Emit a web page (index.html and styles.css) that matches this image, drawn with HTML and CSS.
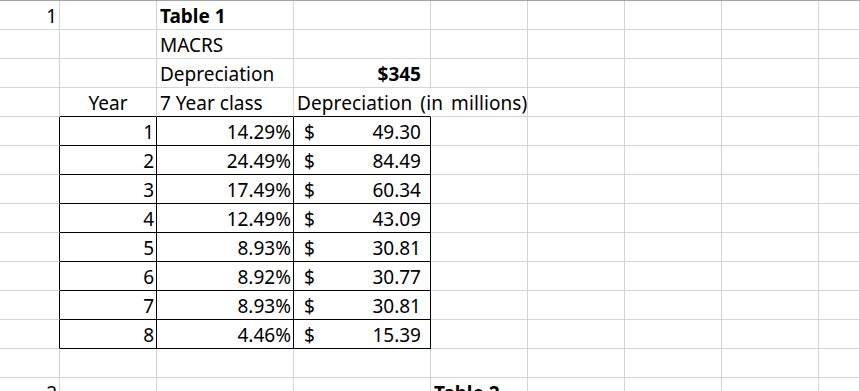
FILE: index.html
```html
<!DOCTYPE html>
<html lang="en">
<head>
<meta charset="utf-8">
<title>Table 1 MACRS Depreciation</title>
<link rel="stylesheet" href="styles.css">
</head>
<body>
<div class="sheet">
  <!-- row 1 -->
  <div class="c r">1</div><div class="c"></div><div class="c b">Table 1</div><div class="c"></div><div class="c"></div><div class="c"></div><div class="c"></div><div class="c"></div><div class="c"></div>
  <!-- row 2 -->
  <div class="c"></div><div class="c"></div><div class="c">MACRS</div><div class="c"></div><div class="c"></div><div class="c"></div><div class="c"></div><div class="c"></div><div class="c"></div>
  <!-- row 3 -->
  <div class="c"></div><div class="c"></div><div class="c">Depreciation</div><div class="c r b acc-pad">$345</div><div class="c"></div><div class="c"></div><div class="c"></div><div class="c"></div><div class="c"></div>
  <!-- row 4 -->
  <div class="c"></div><div class="c ctr tt">Year</div><div class="c tt">7 Year class</div><div class="c tt spill">Depreciation (in millions)</div><div class="c"></div><div class="c"></div><div class="c"></div><div class="c"></div><div class="c"></div>
  <!-- rows 5-12 -->
  <div class="c tl"></div><div class="c r t">1</div><div class="c r t">14.29%</div><div class="c t acc"><span>$</span><span>49.30</span></div><div class="c"></div><div class="c"></div><div class="c"></div><div class="c"></div><div class="c"></div>
  <div class="c tl"></div><div class="c r t">2</div><div class="c r t">24.49%</div><div class="c t acc"><span>$</span><span>84.49</span></div><div class="c"></div><div class="c"></div><div class="c"></div><div class="c"></div><div class="c"></div>
  <div class="c tl"></div><div class="c r t">3</div><div class="c r t">17.49%</div><div class="c t acc"><span>$</span><span>60.34</span></div><div class="c"></div><div class="c"></div><div class="c"></div><div class="c"></div><div class="c"></div>
  <div class="c tl"></div><div class="c r t">4</div><div class="c r t">12.49%</div><div class="c t acc"><span>$</span><span>43.09</span></div><div class="c"></div><div class="c"></div><div class="c"></div><div class="c"></div><div class="c"></div>
  <div class="c tl"></div><div class="c r t">5</div><div class="c r t">8.93%</div><div class="c t acc"><span>$</span><span>30.81</span></div><div class="c"></div><div class="c"></div><div class="c"></div><div class="c"></div><div class="c"></div>
  <div class="c tl"></div><div class="c r t">6</div><div class="c r t">8.92%</div><div class="c t acc"><span>$</span><span>30.77</span></div><div class="c"></div><div class="c"></div><div class="c"></div><div class="c"></div><div class="c"></div>
  <div class="c tl"></div><div class="c r t">7</div><div class="c r t">8.93%</div><div class="c t acc"><span>$</span><span>30.81</span></div><div class="c"></div><div class="c"></div><div class="c"></div><div class="c"></div><div class="c"></div>
  <div class="c tl"></div><div class="c r t">8</div><div class="c r t">4.46%</div><div class="c t acc"><span>$</span><span>15.39</span></div><div class="c"></div><div class="c"></div><div class="c"></div><div class="c"></div><div class="c"></div>
  <!-- row 13 -->
  <div class="c"></div><div class="c"></div><div class="c"></div><div class="c"></div><div class="c"></div><div class="c"></div><div class="c"></div><div class="c"></div><div class="c"></div>
  <!-- row 14 -->
  <div class="c r">2</div><div class="c"></div><div class="c"></div><div class="c"></div><div class="c b">Table 2</div><div class="c"></div><div class="c"></div><div class="c"></div><div class="c"></div>
</div>
</body>
</html>
```

FILE: styles.css
```css
html, body {
  margin: 0;
  padding: 0;
  background: #ffffff;
  overflow: hidden;
}

.sheet {
  display: grid;
  grid-template-columns: 60px 97px 137px 137px 97px 97px 97px 97px 1fr;
  grid-auto-rows: 29px;
  border-top: 1px solid #a3a3a3;
  font-family: "Noto Sans", "Open Sans", sans-serif;
  font-size: 19px;
  line-height: 20px;
  color: #000;
}

.c {
  box-sizing: border-box;
  display: flex;
  align-items: flex-end;
  padding: 0 3px 3px 3px;
  border-right: 1px solid #d4d4d4;
  border-bottom: 1px solid #d4d4d4;
  white-space: nowrap;
  min-width: 0;
}

.r { justify-content: flex-end; padding-right: 2px; }
.ctr { justify-content: center; }
.b { font-weight: 700; }

.acc-pad { padding-right: 9px; }

.acc {
  justify-content: space-between;
  padding-left: 10px;
  padding-right: 9px;
}

.spill {
  overflow: visible;
  border-right-color: transparent;
  padding-left: 3px;
  word-spacing: 3px;
  letter-spacing: 0.1px;
}

/* table borders */
.tl { border-right-color: #000; }
.tt { border-bottom-color: #000; }
.t { border-right-color: #000; border-bottom-color: #000; }
```
